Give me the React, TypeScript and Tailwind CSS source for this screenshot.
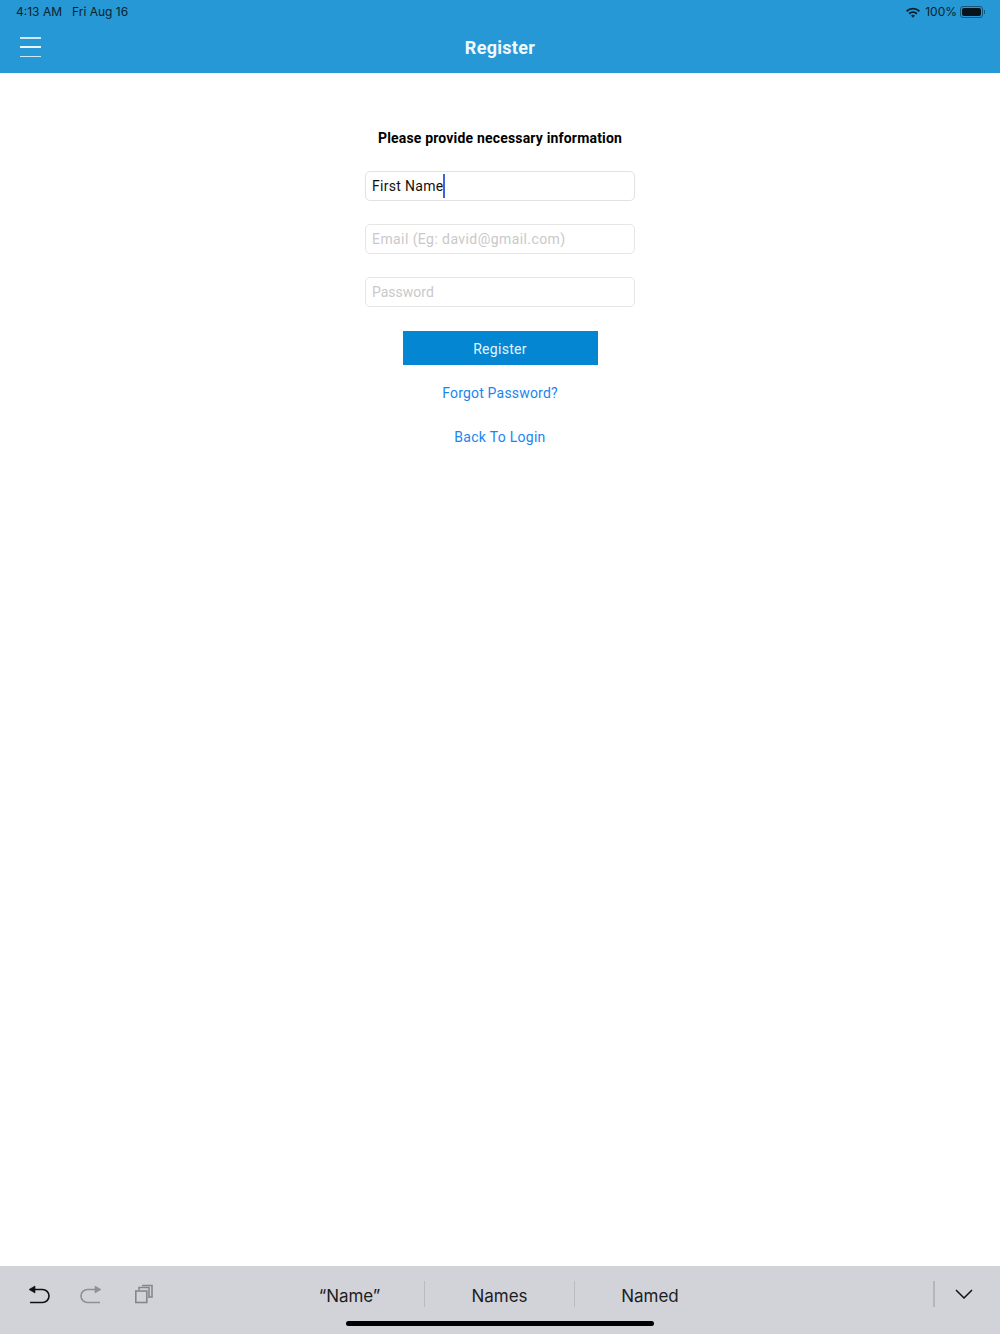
export default function App() {
  const din = { fontFamily: '"Roboto", "Liberation Sans", sans-serif' };
  return (
    <div className="flex h-[1334px] w-[1000px] flex-col bg-white" style={din}>
      <header className="h-[73px] shrink-0 bg-[#2698d6]">
        <div className="flex h-[24px] items-center justify-between pl-[16px] pr-[15px] font-['Inter',sans-serif] text-[12px] text-[#0b1f2d]">
          <div className="flex gap-[10px]">
            <span>4:13 AM</span>
            <span>Fri Aug 16</span>
          </div>
          <div className="flex items-center gap-[3px]">
            <div className="flex items-center gap-[5px]">
              <svg width="14" height="11" viewBox="0 0 14 11" fill="#0b1f2d">
                <path d="M0 3.6 A10 10 0 0 1 14 3.6 L12.8 4.9 A8.2 8.2 0 0 0 1.2 4.9 Z" />
                <path d="M2.5 6.1 A6.4 6.4 0 0 1 11.5 6.1 L10.2 7.4 A4.6 4.6 0 0 0 3.8 7.4 Z" />
                <path d="M5 8.6 A2.9 2.9 0 0 1 9 8.6 L7 10.8 Z" />
              </svg>
              <span>100%</span>
            </div>
            <div className="flex items-center gap-[1px]">
              <div className="h-[12px] w-[23px] rounded-[3px] border border-[#14577f] p-[1px]">
                <div className="h-full w-full rounded-[2px] bg-[#06141d]" />
              </div>
              <div className="h-[4px] w-[1px] bg-[#14577f]" />
            </div>
          </div>
        </div>
        <div className="relative flex h-[48px] items-center justify-center pb-[2px]">
          <div className="absolute left-[20px] top-[13px] flex h-[20px] w-[21px] flex-col justify-between">
            <div className="h-[1.5px] bg-[#cfe8f6]" />
            <div className="h-[1.5px] bg-[#eaf5fb]" />
            <div className="h-[1.5px] bg-[#cfe8f6]" />
          </div>
          <h1 className="text-[18px] font-bold tracking-[0.3px] text-[#f2f9fd]">Register</h1>
        </div>
      </header>

      <main className="flex flex-1 flex-col items-center pt-[55px]">
        <p className="h-[20px] text-[14px] font-bold leading-[20px] tracking-[0.18px] text-black">
          Please provide necessary information
        </p>
        <div className="mt-[23px] flex h-[30px] w-[270px] items-center rounded-[5px] border border-[#e2e2e2] px-[6px] text-[14px] tracking-[0.3px] text-[#111]">
          <span className="pt-px">First Name</span>
          <span className="h-[24px] w-[2px] bg-[#3f63e0]" />
        </div>
        <div className="mt-[23px] flex h-[30px] w-[270px] items-center rounded-[5px] border border-[#e6e6e6] px-[6px] pt-px text-[14px] tracking-[0.42px] text-[#c9c9c9]">
          Email (Eg: david@gmail.com)
        </div>
        <div className="mt-[23px] flex h-[30px] w-[270px] items-center rounded-[5px] border border-[#e6e6e6] px-[6px] pt-px text-[14px] text-[#c9c9c9]">
          Password
        </div>
        <button className="mt-[24px] h-[34px] w-[195px] bg-[#0486d3] pt-[2px] text-[14px] tracking-[0.3px] text-[#e8f4fb]">
          Register
        </button>
        <a className="mt-[18px] h-[20px] text-[14px] leading-[20px] tracking-[0.19px] text-[#1a85f0]">Forgot Password?</a>
        <a className="mt-[24px] h-[20px] text-[14px] leading-[20px] tracking-[0.28px] text-[#1a85f0]">Back To Login</a>
      </main>

      <footer className="relative h-[68px] shrink-0 bg-[#d1d3d9] font-['Inter',sans-serif]">
        <div className="flex h-[55px] items-center">
          <div className="flex w-[275px] items-center pl-[28px]">
            <svg width="22" height="20" viewBox="0 0 22 20" fill="none" stroke="#111" strokeWidth="1.6">
              <path d="M3 5.5 H14.5 A6.5 6.5 0 0 1 14.5 18.5 H2" />
              <path d="M1 5.5 L7 2 V9 Z" fill="#111" strokeWidth="0.6" />
            </svg>
            <svg className="ml-[30px]" width="22" height="20" viewBox="0 0 22 20" fill="none" stroke="#8e9094" strokeWidth="1.6">
              <path d="M19 5.5 H7.5 A6.5 6.5 0 0 0 7.5 18.5 H20" />
              <path d="M21 5.5 L15 2 V9 Z" fill="#8e9094" strokeWidth="0.6" />
            </svg>
            <svg className="ml-[31px]" width="21" height="20" viewBox="0 0 21 20" fill="none" stroke="#85878b" strokeWidth="1.6">
              <rect x="2.8" y="7" width="11" height="11.5" />
              <path d="M6 6 V3.5 H16 V14" />
              <path d="M9 1.5 H19 V13 H16" />
            </svg>
          </div>
          <div className="flex items-center text-[17px] text-[#1d1d1f]">
            <span className="w-[149px] translate-y-[3px] text-center">“Name”</span>
            <span className="h-[26px] w-px bg-[#babcc2]" />
            <span className="w-[149px] translate-y-[3px] text-center">Names</span>
            <span className="h-[26px] w-px bg-[#babcc2]" />
            <span className="w-[150px] translate-y-[3px] text-center">Named</span>
          </div>
          <span className="ml-[208px] h-[26px] w-[2px] bg-[#b4b6bb]" />
          <svg className="ml-[20px]" width="18" height="10" viewBox="0 0 18 10" fill="none" stroke="#111" strokeWidth="1.5">
            <path d="M1 1 L9 9 L17 1" />
          </svg>
        </div>
        <div className="mx-auto h-[5px] w-[308px] rounded-full bg-black" />
      </footer>
    </div>
  );
}
